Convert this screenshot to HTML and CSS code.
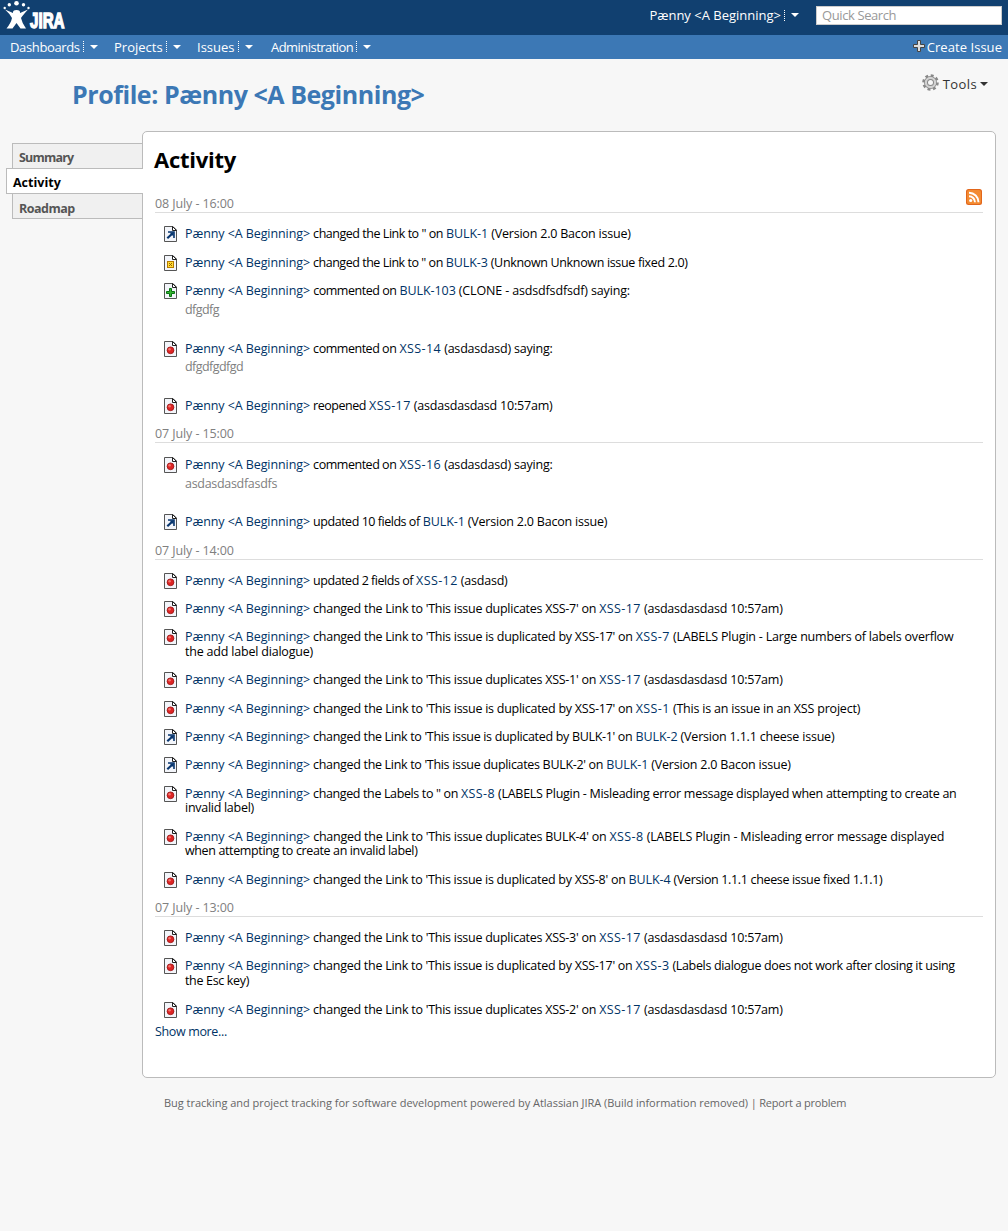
FILE: index.html
```
<!DOCTYPE html>
<html lang="en">
<head>
<meta charset="utf-8">
<title>Profile: Pænny &lt;A Beginning&gt;</title>
<link rel="stylesheet" href="styles.css">
</head>
<body>
<svg class="defs" aria-hidden="true">
  <defs>
    <g id="page"><path d="M.5.5H9L12.5 4V15.5H.5Z" fill="#f3f5fa" stroke="#555"/><path d="M8.500.5V4.500H12.500Z" fill="#fff" stroke="#222"/></g>
    <symbol id="i-arrow" viewBox="0 0 13 16"><use href="#page"/><path d="M4 6H10V12" fill="none" stroke="#08366f" stroke-width="1.600"/><path d="M5.500 6.500H9.500V10.500Z" fill="#08366f"/><path d="M3.300 12.300L9 7" stroke="#08366f" stroke-width="2.200"/></symbol>
    <symbol id="i-box" viewBox="0 0 13 16"><use href="#page"/><rect x="3.500" y="6.500" width="6" height="6" fill="#ffdc35" stroke="#b57a00"/><path d="M5 8L8 11M8 8L5 11" stroke="#986000"/></symbol>
    <symbol id="i-plus" viewBox="0 0 13 16"><use href="#page"/><path d="M5.500 5.500H7.500V8.500H10.500V10.500H7.500V13.500H5.500V10.500H2.500V8.500H5.500Z" fill="#35b52f" stroke="#087313" stroke-width="1"/></symbol>
    <symbol id="i-bug" viewBox="0 0 13 16"><use href="#page"/><circle cx="6.500" cy="9.300" r="3.400" fill="#de2525" stroke="#971010" stroke-width=".8"/><circle cx="5.600" cy="8.300" r="1.200" fill="#f27870"/></symbol>
  </defs>
</svg>
<header class="top">
  <svg class="logo" width="64" height="29" viewBox="0 0 64 29" role="img" aria-label="JIRA">
    <g fill="#fff"><circle cx="1.700" cy="7" r="1.200"/><circle cx="6.300" cy="3.800" r="1.700"/><circle cx="13.500" cy="2.300" r="2.300"/><circle cx="20.500" cy="3.800" r="1.700"/><circle cx="25.500" cy="7" r="1.200"/>
    <path d="M2 8.500L10 12Q9.500 9 13.500 9Q17.500 9 17 12L25 8.500Q20 14 18 17Q19 22 23 27.500H17.500L13.500 22L9.500 27.500H3.500Q8 22 9 17Q7 13 2 8.500Z"/></g>
    <text x="27" y="26.500" class="logo-text" textLength="34.500" lengthAdjust="spacingAndGlyphs">JIRA</text>
  </svg>
  <div class="account"><span class="drop">Pænny &lt;A Beginning&gt;</span></div>
  <div class="search">Quick Search</div>
</header>
<nav class="menu">
  <a class="drop m1">Dashboards</a><a class="drop m2">Projects</a><a class="drop m3">Issues</a><a class="drop m4">Administration</a>
  <a class="create"><svg width="12" height="12" viewBox="0 0 12 12"><path d="M4.500.5H7.500V4.500H11.500V7.500H7.500V11.500H4.500V7.500H.5V4.500H4.500Z" fill="#ddd" stroke="#444"/></svg>Create Issue</a>
</nav>
<div class="heading">
  <h1>Profile: Pænny &lt;A Beginning&gt;</h1>
  <a class="tools"><svg width="17" height="17" viewBox="0 0 17 17"><circle cx="8.500" cy="8.500" r="7" fill="none" stroke="#888" stroke-width="2.600" stroke-dasharray="2.900 2.600"/><circle cx="8.500" cy="8.500" r="4.500" fill="none" stroke="#888" stroke-width="4"/><circle cx="8.500" cy="8.500" r="4.600" fill="none" stroke="#d2d2d2" stroke-width="2.200"/></svg><span>Tools</span><i></i></a>
</div>
<div class="columns">
  <ul class="tabs"><li class="summary">Summary</li><li class="active">Activity</li><li class="roadmap">Roadmap</li></ul>
  <main class="panel">
    <h2>Activity</h2>
    <section>
      <h3>08 July - 16:00<svg class="rss" width="16" height="16" viewBox="0 0 16 16"><rect width="16" height="16" rx="2.500" fill="#e2661b"/><rect x="1" y="1" width="14" height="14" rx="2" fill="#f38b32"/><circle cx="4.700" cy="11.500" r="1.600" fill="#fff"/><path d="M3 7.200A6 6 0 0 1 9 13.200M3 3.700A9.500 9.500 0 0 1 12.500 13.200" fill="none" stroke="#fff" stroke-width="1.900"/></svg></h3>
      <div class="item"><svg><use href="#i-arrow"/></svg><p><a class="user">Pænny &lt;A Beginning&gt;</a> <span class="short">changed the Link to '' on</span> <a>BULK-1</a> (Version 2.0 Bacon issue)</p></div>
      <div class="item tight"><svg><use href="#i-box"/></svg><p><a class="user">Pænny &lt;A Beginning&gt;</a> <span class="short">changed the Link to '' on</span> <a>BULK-3</a> (Unknown Unknown issue fixed 2.0)</p></div>
      <div class="item loose"><svg><use href="#i-plus"/></svg><p><a class="user">Pænny &lt;A Beginning&gt;</a> <span class="short">commented on</span> <a>BULK-103</a> (CLONE - asdsdfsdfsdf) saying:<q>dfgdfg</q></p></div>
      <div class="item"><svg><use href="#i-bug"/></svg><p><a class="user">Pænny &lt;A Beginning&gt;</a> <span class="short">commented on</span> <a class="xss">XSS-14</a> (asdasdasd) saying:<q>dfgdfgdfgd</q></p></div>
      <div class="item"><svg><use href="#i-bug"/></svg><p><a class="user">Pænny &lt;A Beginning&gt;</a> <span class="short">reopened</span> <a class="xss">XSS-17</a> (asdasdasdasd 10:57am)</p></div>
    </section>
    <section>
      <h3>07 July - 15:00</h3>
      <div class="item"><svg><use href="#i-bug"/></svg><p><a class="user">Pænny &lt;A Beginning&gt;</a> <span class="short">commented on</span> <a class="xss">XSS-16</a> (asdasdasd) saying:<q class="wide">asdasdasdfasdfs</q></p></div>
      <div class="item"><svg><use href="#i-arrow"/></svg><p><a class="user">Pænny &lt;A Beginning&gt;</a> <span class="short">updated 10 fields of</span> <a>BULK-1</a> (Version 2.0 Bacon issue)</p></div>
    </section>
    <section>
      <h3>07 July - 14:00</h3>
      <div class="item"><svg><use href="#i-bug"/></svg><p><a class="user">Pænny &lt;A Beginning&gt;</a> <span class="short">updated 2 fields of</span> <a class="xss">XSS-12</a> (asdasd)</p></div>
      <div class="item"><svg><use href="#i-bug"/></svg><p><a class="user">Pænny &lt;A Beginning&gt;</a> <span>changed the Link to 'This issue duplicates XSS-7' on</span> <a class="xss">XSS-17</a> (asdasdasdasd 10:57am)</p></div>
      <div class="item"><svg><use href="#i-bug"/></svg><p><a class="user">Pænny &lt;A Beginning&gt;</a> <span>changed the Link to 'This issue is duplicated by XSS-17' on</span> <a class="xss">XSS-7</a> (LABELS Plugin - Large numbers of labels overflow<br>the add label dialogue)</p></div>
      <div class="item"><svg><use href="#i-bug"/></svg><p><a class="user">Pænny &lt;A Beginning&gt;</a> <span>changed the Link to 'This issue duplicates XSS-1' on</span> <a class="xss">XSS-17</a> (asdasdasdasd 10:57am)</p></div>
      <div class="item"><svg><use href="#i-bug"/></svg><p><a class="user">Pænny &lt;A Beginning&gt;</a> <span>changed the Link to 'This issue is duplicated by XSS-17' on</span> <a class="xss">XSS-1</a> (This is an issue in an XSS project)</p></div>
      <div class="item"><svg><use href="#i-arrow"/></svg><p><a class="user">Pænny &lt;A Beginning&gt;</a> <span class="bulk">changed the Link to 'This issue is duplicated by BULK-1' on</span> <a>BULK-2</a> (Version 1.1.1 cheese issue)</p></div>
      <div class="item"><svg><use href="#i-arrow"/></svg><p><a class="user">Pænny &lt;A Beginning&gt;</a> <span class="bulk">changed the Link to 'This issue duplicates BULK-2' on</span> <a>BULK-1</a> (Version 2.0 Bacon issue)</p></div>
      <div class="item snug"><svg><use href="#i-bug"/></svg><p><a class="user">Pænny &lt;A Beginning&gt;</a> <span class="labels">changed the Labels to '' on</span> <a class="xss">XSS-8</a> (LABELS Plugin - Misleading error message displayed when attempting to create an<br>invalid label)</p></div>
      <div class="item loose"><svg><use href="#i-bug"/></svg><p><a class="user">Pænny &lt;A Beginning&gt;</a> <span>changed the Link to 'This issue duplicates BULK-4' on</span> <a class="xss">XSS-8</a> (LABELS Plugin - Misleading error message displayed<br><span class="labels">when attempting to create an invalid label)</span></p></div>
      <div class="item tight"><svg><use href="#i-bug"/></svg><p><a class="user">Pænny &lt;A Beginning&gt;</a> <span>changed the Link to 'This issue is duplicated by XSS-8' on</span> <a>BULK-4</a> (Version 1.1.1 cheese issue fixed 1.1.1)</p></div>
    </section>
    <section>
      <h3>07 July - 13:00</h3>
      <div class="item"><svg><use href="#i-bug"/></svg><p><a class="user">Pænny &lt;A Beginning&gt;</a> <span>changed the Link to 'This issue duplicates XSS-3' on</span> <a class="xss">XSS-17</a> (asdasdasdasd 10:57am)</p></div>
      <div class="item tight"><svg><use href="#i-bug"/></svg><p><a class="user">Pænny &lt;A Beginning&gt;</a> <span>changed the Link to 'This issue is duplicated by XSS-17' on</span> <a class="xss">XSS-3</a> (Labels dialogue does not work after closing it using<br>the Esc key)</p></div>
      <div class="item"><svg><use href="#i-bug"/></svg><p><a class="user">Pænny &lt;A Beginning&gt;</a> <span>changed the Link to 'This issue duplicates XSS-2' on</span> <a class="xss">XSS-17</a> (asdasdasdasd 10:57am)</p></div>
    </section>
    <a class="more">Show more...</a>
  </main>
</div>
<footer><span>Bug tracking and project tracking for software development powered by Atlassian JIRA (Build information removed)</span> | Report a problem</footer>
</body>
</html>
```
FILE: styles.css
```
* { box-sizing: border-box; }
body { margin: 0; background: #f7f7f7; color: #000; font: 12.5px/14.8px "Open Sans", "Noto Sans", sans-serif; }
h1, h2, h3, p, ul { margin: 0; padding: 0; }
.defs { display: none; }
.top { display: flex; height: 35px; background: #114070; color: #fff; }
.logo { margin: 1px 0 0 3px; overflow: visible; }
.logo-text { font: bold 22px "Liberation Sans", sans-serif; fill: #fff; stroke: #fff; stroke-width: 1.5px; }
.account { margin: 6px 17px 0 auto; font-size: 13px; line-height: 18px; }
.search { width: 186px; height: 19px; margin: 6px 6px 0 0; padding-left: 5px; border: 1px solid #ccc; background: #fff; color: #999; font-size: 13px; line-height: 17px; letter-spacing: -.4px; }
.drop { display: flex; align-items: center; white-space: nowrap; }
.drop::before { content: ""; order: 1; height: 11px; margin: 0 6px 0 3px; border-left: 1px dotted #fff; }
.drop::after { content: ""; order: 2; border: 4px solid transparent; border-top-color: #fff; border-bottom: 0; }
.menu { display: flex; align-items: center; height: 24px; padding: 0 6px 0 10px; background: #3c78b5; color: #fff; font-size: 13px; }
.m1 { width: 104px; letter-spacing: -.36px; }
.m2 { width: 83px; }
.m3 { width: 74px; }
.m4 { letter-spacing: -.54px; }
.create { display: flex; align-items: center; gap: 2px; margin-left: auto; letter-spacing: .05px; }
.create svg { margin-top: -2px; }
.heading { display: flex; justify-content: space-between; height: 72px; padding: 15px 20px 0 72px; }
h1 { color: #3c78b5; font-size: 25px; line-height: 41px; letter-spacing: -.44px; }
.tools { display: flex; align-items: center; height: 18px; color: #333; font-size: 13px; }
.tools svg { margin-top: -2px; }
.tools span { margin: 2px 3px 0 4px; letter-spacing: .4px; }
.tools i { margin-top: 2px; border: 4px solid transparent; border-top-color: #333; border-bottom: 0; }
.columns { display: flex; height: 947px; }
.tabs { width: 143px; padding: 12px 0 0 12px; list-style: none; position: relative; z-index: 1; }
.tabs li { height: 26px; margin-bottom: -1px; padding: 2px 0 0 6px; border: 1px solid #bbb; background: #f0f0f0; color: #555; font-weight: bold; line-height: 24px; }
.tabs .summary { letter-spacing: -.8px; }
.tabs .roadmap { padding-top: 3px; letter-spacing: -.5px; }
.tabs .active { position: relative; margin-left: -6px; border-right: 0; background: #fff; color: #000; }
.panel { width: 854px; margin-left: -1px; padding: 15px 12px 0; border: 1px solid #bbb; border-radius: 5px; background: #fff; }
h2 { height: 42px; margin-left: -1px; font-size: 22px; line-height: 25px; letter-spacing: -.25px; }
h3 { display: flex; justify-content: space-between; height: 24px; margin-bottom: 6.1px; padding-top: 8px; border-bottom: 1px solid #ddd; color: #808080; font-size: 12.5px; font-weight: normal; letter-spacing: -.1px; }
.rss { margin: -8px 1px 0 0; }
.item { display: flex; padding: 8.15px 0 5.35px 9px; letter-spacing: -.2px; }
.item svg { flex: none; width: 13px; height: 16px; margin: -1px 8px -3px 0; }
.item p { white-space: nowrap; }
.item span { letter-spacing: -.26px; }
.item .short { letter-spacing: -.47px; }
.item .labels { letter-spacing: -.37px; }
.item .bulk { letter-spacing: -.32px; }
.item a { color: #036; letter-spacing: -.08px; }
.item .xss { letter-spacing: .4px; }
.tight { letter-spacing: -.34px; }
.snug { letter-spacing: -.28px; }
.loose { letter-spacing: -.15px; }
.item q { display: block; padding: 4px 0 10.7px; color: #808080; quotes: none; letter-spacing: -.55px; }
.item .wide { letter-spacing: -.3px; }
.more { display: block; padding-top: 2px; color: #036; letter-spacing: -.35px; }
footer { padding: 18px 0 0 164px; color: #666; font-size: 11px; letter-spacing: -.2px; }
footer span { letter-spacing: -.03px; }
```
